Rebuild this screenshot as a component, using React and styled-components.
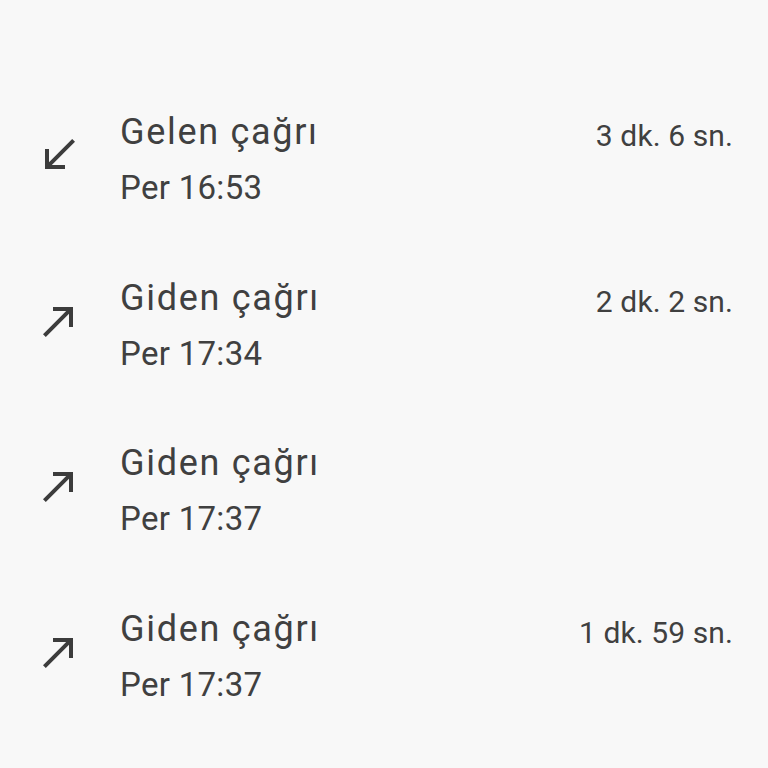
import styled, { createGlobalStyle } from "styled-components";

const GlobalStyle = createGlobalStyle`
  html, body {
    margin: 0;
    padding: 0;
    background: #f8f8f8;
  }
  body {
    font-family: Roboto, "Noto Sans", "Liberation Sans", sans-serif;
    color: #404040;
  }
`;

const calls = [
  { type: "in", label: "Gelen çağrı", time: "Per 16:53", duration: "3 dk. 6 sn." },
  { type: "out", label: "Giden çağrı", time: "Per 17:34", duration: "2 dk. 2 sn." },
  { type: "out", label: "Giden çağrı", time: "Per 17:37", duration: "" },
  { type: "out", label: "Giden çağrı", time: "Per 17:37", duration: "1 dk. 59 sn." },
];

const ReceivedIcon = () => (
  <svg width="48" height="48" viewBox="0 0 24 24" fill="#3c3c3c">
    <path d="M20 5.41L18.59 4 7 15.59V9H5v10h10v-2H8.41z" />
  </svg>
);

const MadeIcon = () => (
  <svg width="48" height="48" viewBox="0 0 24 24" fill="#3c3c3c">
    <path d="M9 5v2h6.59L4 18.59 5.41 20 17 8.41V15h2V5z" />
  </svg>
);

const CallLog = () => {
  return (
    <Wrapper>
      <GlobalStyle />
      {calls.map((item, index) => {
        return (
          <Row key={index}>
            <IconBox>{item.type === "in" ? <ReceivedIcon /> : <MadeIcon />}</IconBox>
            <Info>
              <TopLine>
                <Title>{item.label}</Title>
                {item.duration && <Duration>{item.duration}</Duration>}
              </TopLine>
              <Time>{item.time}</Time>
            </Info>
          </Row>
        );
      })}
    </Wrapper>
  );
};

const Wrapper = styled.main`
  min-height: 100vh;
  box-sizing: border-box;
  padding-top: 76px;
  background: #f8f8f8;
`;

const Row = styled.div`
  display: flex;
  align-items: flex-start;
  height: 165.5px;
  box-sizing: border-box;
  padding: 34px 35px 0 35px;
`;

const IconBox = styled.div`
  width: 48px;
  height: 48px;
  margin-top: 21px;
  margin-right: 37px;
  flex-shrink: 0;
`;

const Info = styled.div`
  flex: 1;
  display: flex;
  flex-direction: column;
`;

const TopLine = styled.div`
  display: flex;
  justify-content: space-between;
  align-items: flex-start;
  height: 44px;
`;

const Title = styled.span`
  font-size: 36px;
  line-height: 44px;
  letter-spacing: 1.7px;
`;

const Duration = styled.span`
  font-size: 30px;
  line-height: 52px;
  letter-spacing: 0.1px;
`;

const Time = styled.span`
  margin-top: 14px;
  font-size: 33px;
  line-height: 40px;
  letter-spacing: 0.3px;
`;

export default CallLog;
